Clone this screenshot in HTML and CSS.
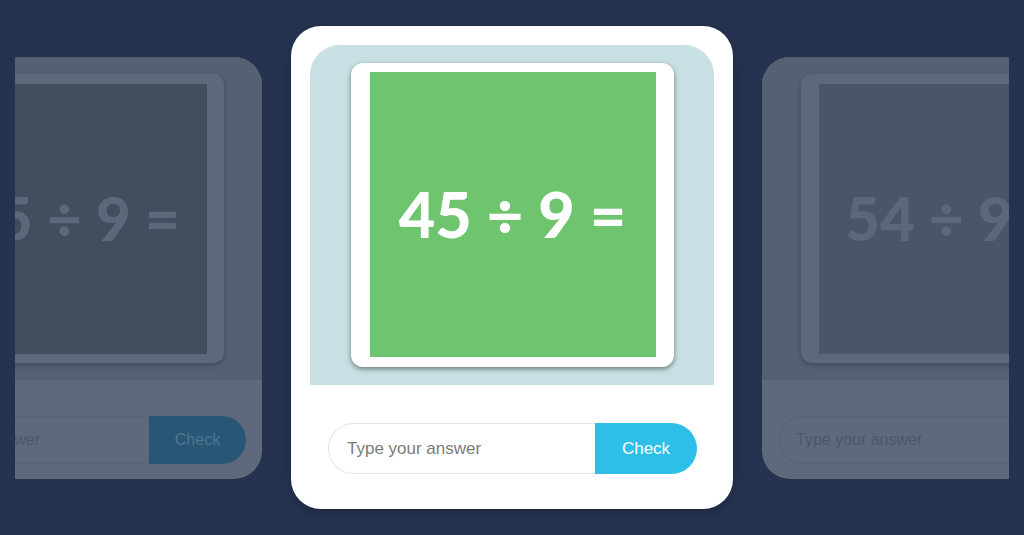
FILE: index.html
```html
<!DOCTYPE html>
<html lang="en">
<head>
<meta charset="utf-8">
<title>Division flashcards</title>
<link rel="stylesheet" href="styles.css">
</head>
<body>
<div class="carousel">
  <div class="track">
    <div class="card side side-left">
      <div class="panel">
        <div class="frame"><div class="face"><span class="eq">45 ÷ 9 =</span></div></div>
      </div>
      <div class="answer">
        <div class="input">Type your answer</div>
        <div class="btn">Check</div>
      </div>
    </div>
    <div class="card active">
      <div class="panel">
        <div class="frame"><div class="face"><span class="eq">45 ÷ 9 =</span></div></div>
      </div>
      <div class="answer">
        <div class="input">Type your answer</div>
        <div class="btn">Check</div>
      </div>
    </div>
    <div class="card side side-right">
      <div class="panel">
        <div class="frame"><div class="face"><span class="eq">54 ÷ 9 =</span></div></div>
      </div>
      <div class="answer">
        <div class="input">Type your answer</div>
        <div class="btn">Check</div>
      </div>
    </div>
  </div>
</div>
</body>
</html>
```
FILE: styles.css
```css
html, body {
  margin: 0;
  padding: 0;
  background: #253350;
  height: 535px;
  overflow: hidden;
  font-family: "Liberation Sans", Arial, sans-serif;
}
.carousel {
  margin: 0 15px;
  height: 535px;
  overflow: hidden;
}
.track {
  height: 100%;
  display: flex;
  justify-content: center;
  align-items: center;
  gap: 29px;
}
.card {
  flex-shrink: 0;
  box-sizing: border-box;
  display: flex;
  flex-direction: column;
}
.active {
  width: 442px;
  height: 483px;
  padding: 19px;
  background: #fff;
  border-radius: 30px;
  box-shadow: 0 4px 12px rgba(0,0,0,0.2);
}
.active .panel {
  height: 340px;
  background: #c8dfe3;
  border-radius: 30px 30px 0 0;
  display: flex;
  justify-content: center;
  padding-top: 18px;
  box-sizing: border-box;
}
.active .frame {
  width: 323px;
  height: 304px;
  box-sizing: border-box;
  padding: 9px 18px 10px 19px;
  background: #fff;
  border-radius: 12px;
  box-shadow: 0 2px 5px rgba(0,0,0,0.45);
}
.face {
  width: 100%;
  height: 100%;
  display: flex;
  align-items: center;
  justify-content: center;
}
.active .face { background: #6fc46e; }
.eq {
  font-family: "Lato", sans-serif;
  font-weight: 900;
  white-space: nowrap;
  color: #fff;
  font-size: 63px;
  letter-spacing: 0;
  margin-top: -2px;
}
.answer {
  display: flex;
}
.active .answer {
  margin: 38px 17px 0 18px;
  height: 51px;
}
.input {
  flex: 1;
  box-sizing: border-box;
  display: flex;
  align-items: center;
  border: 1px solid #e1e4ea;
  border-right: none;
  border-radius: 26px 0 0 26px;
  padding-left: 18px;
  font-size: 17px;
  color: #7b7b7b;
}
.btn {
  width: 102px;
  display: flex;
  align-items: center;
  justify-content: center;
  background: #2dbfe8;
  color: #fff;
  font-size: 17px;
  border-radius: 0 26px 26px 0;
}

/* side (inactive) cards */
.side {
  width: 382px;
  height: 422px;
  background: #5f697c;
  border-radius: 28px;
}
.side .panel {
  height: 323px;
  background: #566073;
  border-radius: 28px 28px 0 0;
  border-bottom: 1px solid #535d70;
  display: flex;
  justify-content: center;
  padding-top: 17px;
  box-sizing: border-box;
}
.side .frame {
  width: 305px;
  height: 289px;
  box-sizing: border-box;
  padding: 10px 17px 9px 18px;
  background: #5e687b;
  border-radius: 11px;
  box-shadow: 0 2px 5px rgba(20,28,45,0.35);
}
.side-left .face { background: #434d5e; }
.side-right .face { background: #4b5568; }
.side .eq {
  font-size: 60px;
  color: #5d677a;
}
.side .answer {
  margin: 36px 16px 0 17px;
  height: 48px;
}
.side .input {
  border-color: #596377;
  color: #4d576b;
  font-size: 16px;
  padding-left: 16px;
}
.side .btn {
  width: 97px;
  background: #285676;
  color: #4f7690;
  font-size: 16px;
}
```
